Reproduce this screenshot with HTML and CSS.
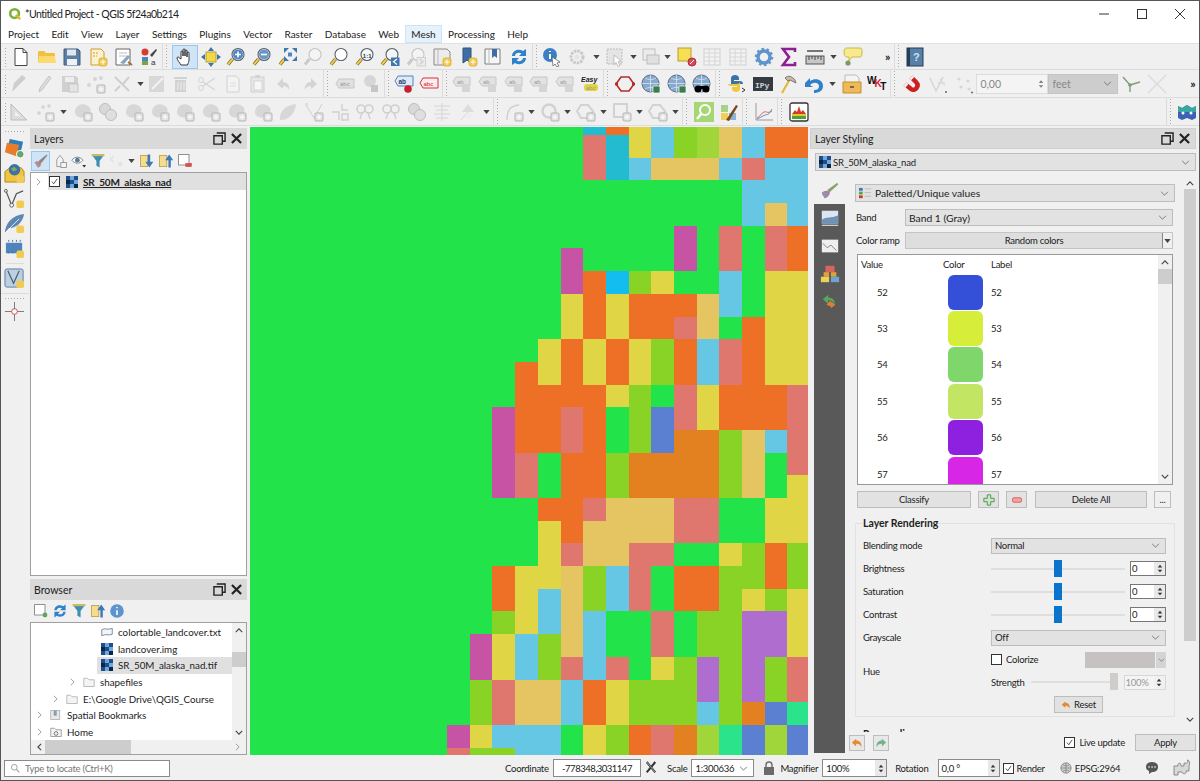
FILE: index.html
```html
<!DOCTYPE html>
<html lang="en">
<head>
  <meta charset="UTF-8" />
  <title>QGIS</title>
  <link rel="stylesheet" href="styles.css">
</head>
<body>

<!-- icon sheet -->
<svg class="sheet" width="0" height="0">
  <defs>
    <symbol id="badge" viewBox="0 0 20 20"><rect x="11" y="11" width="8" height="8" rx="2" fill="#f2cb55" stroke="#d9ab2e" stroke-width=".8"/><path d="M15 12.500v5M12.500 15h5" stroke="#fff" stroke-width="1"/></symbol>
    <symbol id="gbadge" viewBox="0 0 20 20"><rect x="11" y="11" width="8" height="8" rx="1" fill="#e2e2e2" stroke="#b5b5b5"/><path d="M15 12.500v5M12.500 15h5" stroke="#fff"/></symbol>
    <symbol id="qgis" viewBox="0 0 16 16"><circle cx="7.500" cy="7.500" r="5" fill="none" stroke="#7bb33a" stroke-width="3"/><path d="M9 9l5 5" stroke="#e8b52c" stroke-width="2.500"/></symbol>
    <symbol id="new" viewBox="0 0 20 20"><path d="M4 1.500h8l4 4v13H4z" fill="#fff" stroke="#444"/><path d="M12 1.500v4h4" fill="none" stroke="#444"/></symbol>
    <symbol id="open" viewBox="0 0 20 20"><path d="M1 16V5l1-1h5l2 2h8l1 1v9z" fill="#f4bf3c"/><path d="M1 16l1-7h16l1 7z" fill="#fbdb71"/></symbol>
    <symbol id="save" viewBox="0 0 20 20"><path d="M2 2h14l2 2v14H2z" fill="#5d7fa3" stroke="#3f5c7c"/><rect x="5" y="2.500" width="9" height="6" fill="#dfe7ef"/><rect x="5" y="12" width="10" height="6" fill="#eef2f6"/></symbol>
    <symbol id="layout" viewBox="0 0 20 20"><path d="M3 2h10l3 3v13H3z" fill="#fbf1cf" stroke="#d39b2d"/><path d="M5 6h6M5 9h4" stroke="#d39b2d" stroke-dasharray="2 1"/><use href="#badge"/></symbol>
    <symbol id="props" viewBox="0 0 20 20"><path d="M2 2h14v16H2z" fill="#fff" stroke="#666"/><path d="M5 6h8M5 9h8" stroke="#bbb"/><path d="M6 16l8-8 2 2-6 7z" fill="#88a4c4"/><path d="M14 15l4 3" stroke="#a8702a" stroke-width="2"/></symbol>
    <symbol id="style" viewBox="0 0 20 20"><circle cx="6" cy="5" r="3.500" fill="#d43f2d"/><path d="M3 10h6v4H3z" fill="#4b85c5"/><path d="M3 14h6v4H3z" fill="#7aa53e"/><path d="M11 8l6-6 1 1-5 7z" fill="#444"/><text x="12" y="18" class="svg-small">a</text></symbol>
    <symbol id="hand" viewBox="0 0 20 20"><path d="M6 18c-1-2-4-5-4-7 0-1 1.500-1.500 2.500 0L6 12V5c0-1.500 2-1.500 2 0v4V3c0-1.500 2-1.500 2 0v6V4c0-1.500 2-1.500 2 0v6-4c0-1.500 2-1.500 2 0v7c0 2-1 3-1.500 5z" fill="#fff" stroke="#222" stroke-width=".9"/></symbol>
    <symbol id="panto" viewBox="0 0 20 20"><rect x="5" y="5" width="10" height="10" fill="#f0d848" stroke="#b7a22e"/><path d="M10 0l3 4H7zM10 20l-3-4h6zM0 10l4-3v6zM20 10l-4 3V7z" fill="#3d73ad"/></symbol>
    <symbol id="mag" viewBox="0 0 20 20"><path d="M6.500 12L2 17.500" stroke="#6a5a28" stroke-width="3.400"/><path d="M6.500 12L2 17.500" stroke="#eec94a" stroke-width="2"/><circle cx="12" cy="7.500" r="6" fill="#f4f6f8" stroke="#55606a" stroke-width="1.100"/></symbol>
    <symbol id="zin" viewBox="0 0 20 20"><use href="#mag"/><circle cx="12" cy="7.500" r="5" fill="#4f86c0"/><path d="M12 4.500v6M9 7.500h6" stroke="#fff" stroke-width="1.600"/></symbol>
    <symbol id="zout" viewBox="0 0 20 20"><use href="#mag"/><circle cx="12" cy="7.500" r="5" fill="#4f86c0" opacity=".85"/><path d="M9 7.500h6" stroke="#fff" stroke-width="1.600"/></symbol>
    <symbol id="zfull" viewBox="0 0 20 20"><path d="M6.500 12L2 17.500" stroke="#6a5a28" stroke-width="3.400"/><path d="M6.500 12L2 17.500" stroke="#eec94a" stroke-width="2"/><path d="M6 1h5L6 6zM19 1v5l-5-5zM19 14h-5l5-5zM6 9l5 5H6z" fill="#3e76b0"/><rect x="10" y="5.500" width="4" height="4" fill="#4f86c0"/></symbol>
    <symbol id="zoomg" viewBox="0 0 20 20"><path d="M6.500 12L2 17.500" stroke="#c9c9c9" stroke-width="3"/><circle cx="12" cy="7.500" r="6" fill="#f4f4f4" stroke="#c4c4c4" stroke-width="1.100"/></symbol>
    <symbol id="zlayer" viewBox="0 0 20 20"><use href="#mag"/><circle cx="12" cy="7.500" r="5.200" fill="#fff"/></symbol>
    <symbol id="z11" viewBox="0 0 20 20"><use href="#mag"/><text x="7.800" y="10.500" class="svg-bold">1:1</text></symbol>
    <symbol id="zlast" viewBox="0 0 20 20"><use href="#mag"/><rect x="11" y="10.500" width="8.500" height="8.500" fill="#3e76b0"/><path d="M17 12l-3.500 2.700L17 17.500" fill="none" stroke="#fff" stroke-width="1.300"/></symbol>
    <symbol id="znext" viewBox="0 0 20 20"><use href="#zoomg"/><rect x="11" y="10.500" width="8.500" height="8.500" fill="#ececec" stroke="#cfcfcf"/><path d="M13.500 12l3.500 2.700-3.500 2.800" fill="none" stroke="#cfcfcf" stroke-width="1.300"/></symbol>
    <symbol id="view" viewBox="0 0 20 20"><path d="M2 2h13l3 3v13H2z" fill="#ececec" stroke="#8a8a8a"/><path d="M6 2v16" stroke="#bbb"/><use href="#badge"/></symbol>
    <symbol id="bm" viewBox="0 0 20 20"><path d="M5 1h8v15l-4-3-4 3z" fill="#3f6ea6" stroke="#2d527e"/><use href="#badge"/></symbol>
    <symbol id="bmopen" viewBox="0 0 20 20"><path d="M2 2h15v15H2z" fill="#f6f6f6" stroke="#7e7e7e"/><path d="M6 2v15" stroke="#bbb"/><path d="M9 2h5v9l-2.500-2L9 11z" fill="#3f6ea6"/></symbol>
    <symbol id="refresh" viewBox="0 0 20 20"><path d="M3 9c0-5 6-8 11-5l3-2v7h-7l2.500-2.500C10 5 6 6 6 9zM17 11c0 5-6 8-11 5l-3 2v-7h7l-2.500 2.500C10 15 14 14 14 11z" fill="#2f82c9"/></symbol>
    <symbol id="identify" viewBox="0 0 20 20"><circle cx="8" cy="8" r="7" fill="#3d7fc4"/><path d="M8 4v1M8 7v5" stroke="#fff" stroke-width="2"/><path d="M10 10l8 5-3 1 2 3-2 1-2-3-2 2z" fill="#fff" stroke="#555" stroke-width=".7"/></symbol>
    <symbol id="gearg" viewBox="0 0 20 20"><circle cx="10" cy="10" r="6" fill="none" stroke="#c9c9c9" stroke-width="3" stroke-dasharray="2.500 1"/><circle cx="10" cy="10" r="2.500" fill="#e4e4e4"/></symbol>
    <symbol id="selg" viewBox="0 0 20 20"><rect x="2" y="2" width="15" height="15" fill="#e4e4e4" stroke="#bcbcbc" stroke-dasharray="2 1"/><path d="M9 8l7 6-3 .5 2 4-2 1-2-4-2 2z" fill="#fff" stroke="#aaa" stroke-width=".7"/></symbol>
    <symbol id="copyg" viewBox="0 0 20 20"><rect x="2" y="2" width="12" height="11" fill="#ececec" stroke="#bdbdbd"/><rect x="6" y="8" width="12" height="9" fill="#e0e0e0" stroke="#bdbdbd"/></symbol>
    <symbol id="desel" viewBox="0 0 20 20"><rect x="1" y="1" width="13" height="13" fill="#f7df55" stroke="#b99e2a"/><circle cx="15" cy="15" r="4" fill="#d84a55" stroke="#a8323c"/><path d="M13 17l4-4" stroke="#fff"/></symbol>
    <symbol id="tableg" viewBox="0 0 20 20"><rect x="2" y="2" width="16" height="16" fill="#f3f3f3" stroke="#cfcfcf"/><path d="M2 6h16M2 10h16M2 14h16M7 2v16M13 2v16" stroke="#d6d6d6"/></symbol>
    <symbol id="gear" viewBox="0 0 20 20"><circle cx="10" cy="10" r="6" fill="none" stroke="#5e93cc" stroke-width="3.400"/><circle cx="10" cy="10" r="8" fill="none" stroke="#5e93cc" stroke-width="2.500" stroke-dasharray="2.500 2.500"/></symbol>
    <symbol id="sigma" viewBox="0 0 20 20"><path d="M16 5V2H4l6 8-6 8h12v-3" fill="none" stroke="#8b1f93" stroke-width="2.600"/></symbol>
    <symbol id="ruler" viewBox="0 0 20 20"><path d="M2 4h16" stroke="#333" stroke-width="1.300"/><rect x="1" y="9" width="18" height="8" fill="#c7c7c7" stroke="#555"/><path d="M4 9v4M7 9v3M10 9v4M13 9v3M16 9v4" stroke="#444"/></symbol>
    <symbol id="tip" viewBox="0 0 20 20"><path d="M4 1h13c2 0 2 2 2 4s0 5-2 5H9l-3 4V10H4C2 10 1 8 1 5s1-4 3-4z" fill="#f8e98c" stroke="#c9b850"/><circle cx="5" cy="16" r="2.600" fill="#7e9a63"/></symbol>
    <symbol id="help" viewBox="0 0 20 20"><rect x="2" y="1" width="16" height="18" fill="#5680a8" stroke="#243c55"/><rect x="2" y="1" width="3" height="18" fill="#243c55"/><text x="8" y="14" class="svg-q">?</text></symbol>
    <symbol id="pencilg" viewBox="0 0 20 20"><path d="M3 18l2-9 8-8 4 3-8 8z" fill="#cecece"/></symbol>
    <symbol id="pencilt" viewBox="0 0 20 20"><path d="M4 18l1-4 9-12 2 2-9 12z" fill="#dcdcdc" stroke="#c4c4c4"/></symbol>
    <symbol id="saveg" viewBox="0 0 20 20"><path d="M2 2h14l2 2v14H2z" fill="#d0d0d0"/><rect x="5" y="3" width="9" height="5" fill="#eee"/><rect x="9" y="10" width="9" height="8" fill="#e4e4e4" stroke="#c4c4c4"/></symbol>
    <symbol id="dotsg" viewBox="0 0 20 20"><circle cx="3" cy="11" r="2" fill="#d5d5d5"/><circle cx="9" cy="5" r="2" fill="#d5d5d5"/><circle cx="15" cy="4" r="2" fill="#d5d5d5"/><use href="#gbadge"/></symbol>
    <symbol id="toolsg" viewBox="0 0 20 20"><path d="M3 3l14 14M17 3l-6 7M3 17l5-5" stroke="#cfcfcf" stroke-width="2"/></symbol>
    <symbol id="editg" viewBox="0 0 20 20"><rect x="2" y="2" width="15" height="16" fill="#d8d8d8"/><path d="M5 15L16 4" stroke="#f3f3f3" stroke-width="2"/></symbol>
    <symbol id="trashg" viewBox="0 0 20 20"><path d="M3 3h13v2H3zM4 6h11v12H4z" fill="#d2d2d2"/><path d="M7 8v8M10 8v8M13 8v8" stroke="#efefef"/></symbol>
    <symbol id="cutg" viewBox="0 0 20 20"><path d="M18 4L6 12M18 16L6 8" stroke="#d5d5d5" stroke-width="1.400"/><circle cx="4" cy="6" r="2.500" fill="none" stroke="#d5d5d5"/><circle cx="4" cy="14" r="2.500" fill="none" stroke="#d5d5d5"/></symbol>
    <symbol id="pageg" viewBox="0 0 20 20"><path d="M4 2h9l3 3v13H4z" fill="#f3f3f3" stroke="#d0d0d0"/><path d="M7 9h6M7 12h6" stroke="#ddd"/></symbol>
    <symbol id="pasteg" viewBox="0 0 20 20"><rect x="3" y="3" width="13" height="15" fill="#e7e7e7" stroke="#cfcfcf"/><rect x="6" y="7" width="8" height="9" fill="#f6f6f6" stroke="#d4d4d4"/><rect x="7" y="1" width="5" height="3" fill="#d4d4d4"/></symbol>
    <symbol id="undog" viewBox="0 0 20 20"><path d="M9 4L3 10l6 5v-3c3 0 5 1 6 4 1-5-2-8-6-8z" fill="#d4d4d4"/></symbol>
    <symbol id="redog" viewBox="0 0 20 20"><path d="M11 4l6 6-6 5v-3c-3 0-5 1-6 4-1-5 2-8 6-8z" fill="#d4d4d4"/></symbol>
    <symbol id="abcg" viewBox="0 0 20 20"><path d="M4 5h15v9H4L1 9.500z" fill="#e0e0e0" stroke="#c6c6c6"/><text x="5" y="12.300" class="svg-tag">abc</text></symbol>
    <symbol id="abcpin" viewBox="0 0 20 20"><circle cx="9" cy="7" r="6" fill="#d6d6d6"/><path d="M10 11h7v7h-7z" fill="#c6c6c6"/></symbol>
    <symbol id="abpin" viewBox="0 0 20 20"><path d="M4 2h15v10H4L1 7z" fill="#dfeaf6" stroke="#4d84c0"/><text x="4.500" y="9.600" class="svg-tag-d">ab</text><circle cx="14" cy="15" r="3.800" fill="#c91e2d"/></symbol>
    <symbol id="abcred" viewBox="0 0 20 20"><path d="M4 4h15v10H4L1 9z" fill="#fdecec" stroke="#d4353f"/><text x="4.500" y="11.800" class="svg-tag-r">abc</text></symbol>
    <symbol id="labg" viewBox="0 0 20 20"><path d="M4 3h14v9H4L1 7.500z" fill="#e2e2e2" stroke="#c6c6c6"/><text x="5" y="10" class="svg-tag">ab</text><rect x="10" y="10" width="8" height="8" fill="#d5d5d5"/></symbol>
    <symbol id="easy" viewBox="0 0 20 20"><text x="0" y="8" class="svg-easy">Easy</text><rect x="3" y="10" width="14" height="7" rx="3" fill="#e5d33e"/><text x="5" y="15.800" class="svg-tag">abc</text></symbol>
    <symbol id="hex" viewBox="0 0 20 20"><path d="M6 3h8l5 7-5 7H6l-5-7z" fill="none" stroke="#b42b2b" stroke-width="1.600"/><circle cx="1.500" cy="10" r="1.700" fill="#b42b2b"/><circle cx="18.500" cy="10" r="1.700" fill="#b42b2b"/></symbol>
    <symbol id="globe" viewBox="0 0 20 20"><circle cx="9.500" cy="9.500" r="8.500" fill="#87a9cc" stroke="#566f8c"/><path d="M1 9.500h17M9.500 1v17M4 4c3 2 8 2 11 0M4 15c3-2 8-2 11 0" stroke="#d9e5f0" fill="none" stroke-width=".8"/></symbol>
    <symbol id="globeb" viewBox="0 0 20 20"><use href="#globe"/><rect x="12" y="12" width="7" height="7" rx="1" fill="#3a7c4a" stroke="#fff" stroke-width=".7"/></symbol>
    <symbol id="binoc" viewBox="0 0 20 20"><use href="#globe"/><circle cx="6" cy="15" r="3.500"/><circle cx="14" cy="15" r="3.500"/><rect x="7" y="12" width="6" height="3"/></symbol>
    <symbol id="py" viewBox="0 0 20 20"><path d="M6 8V4c0-2 2-3 4-3s4 1 4 3v2H9v1h6c2 0 3 1 3 3H9c-2 0-3 1-3 3z" fill="#3a73a8" transform="translate(-2 0)"/><path d="M14 11v4c0 2-2 3-4 3s-4-1-4-3v-2h5v-1H5c-2 0-3-1-3-2h9c2 0 3-1 3-3z" fill="#f0c83f" transform="translate(-1 0)"/><path d="M15 14l3 2-3 2" fill="none" stroke="#333"/></symbol>
    <symbol id="ipy" viewBox="0 0 20 20"><rect y="3" width="20" height="14" fill="#353b40"/><text x="2" y="13.500" class="svg-ipy">IPy</text></symbol>
    <symbol id="hammer" viewBox="0 0 20 20"><path d="M4 19L12 5" stroke="#e2b93b" stroke-width="2.200"/><path d="M7 4c3-3 7-2 10 2l1 3-6-3-2 1z" fill="#c9b9a4" stroke="#555" stroke-width=".7"/></symbol>
    <symbol id="undob" viewBox="0 0 20 20"><path d="M1 9l5-5v3c6-4 13-1 13 5s-6 7-9 7v-3c3 0 5-1 5-4 0-3-5-5-9-1l3 2H1z" fill="#2f82c9"/></symbol>
    <symbol id="archive" viewBox="0 0 20 20"><path d="M3 1h11l3 3v7H3z" fill="#f4f4f4" stroke="#bbb"/><path d="M1 8h18v11H1z" fill="#eeb958" stroke="#c58f2e"/><path d="M8 13h4" stroke="#444" stroke-width="1.400"/></symbol>
    <symbol id="magnet" viewBox="0 0 20 20"><path d="M3 10l6 5c4 3 9-3 5-7L9 3" fill="none" stroke="#cc1f1f" stroke-width="4.500"/><path d="M3 10l2 1.700M9 3l1.700 1.700" stroke="#f4f4f4" stroke-width="4.500"/></symbol>
    <symbol id="vertg" viewBox="0 0 20 20"><path d="M2 4l6 13 7-14" fill="none" stroke="#d6d6d6" stroke-width="1.600"/><path d="M9 9h8M12 5l5 7" stroke="#d6d6d6"/><circle cx="18" cy="18" r="1" fill="#666"/></symbol>
    <symbol id="dotg2" viewBox="0 0 20 20"><circle cx="5" cy="5" r="1.600" fill="#d6d6d6"/><circle cx="14" cy="7" r="1.600" fill="#d6d6d6"/><circle cx="7" cy="13" r="1.600" fill="#d6d6d6"/><circle cx="15" cy="15" r="1.600" fill="#d6d6d6"/><circle cx="18" cy="18.500" r="1" fill="#666"/></symbol>
    <symbol id="ysplit" viewBox="0 0 20 20"><path d="M9 18v-7L2 3M9 11l10-3" fill="none" stroke="#7f9d72" stroke-width="1.400"/><circle cx="9" cy="11" r="1.800" fill="#7f9d72"/></symbol>
    <symbol id="xg" viewBox="0 0 20 20"><path d="M1 1l18 18M19 1L1 19" stroke="#dcdcdc" stroke-width="1.500"/></symbol>
    <symbol id="triang" viewBox="0 0 20 20"><path d="M2 2v16h16z" fill="#dcdcdc" stroke="#bdbdbd"/><path d="M6 9v5h5z" fill="#f0f0f0"/></symbol>
    <symbol id="dotb" viewBox="0 0 20 20"><circle cx="4" cy="11" r="1.800" fill="#d3d3d3"/><circle cx="8" cy="5" r="1.800" fill="#d3d3d3"/><circle cx="14" cy="4" r="1.800" fill="#d3d3d3"/><use href="#gbadge"/></symbol>
    <symbol id="blob" viewBox="0 0 20 20"><path d="M3 6c2-4 8-5 12-2 4 2 3 7 0 8-3 2-5 5-9 3-4-1-5-5-3-9z" fill="#d7d7d7"/><use href="#gbadge"/></symbol>
    <symbol id="blob2" viewBox="0 0 20 20"><circle cx="7" cy="7" r="5.500" fill="#d9d9d9" stroke="#bdbdbd"/><circle cx="13" cy="13" r="5.500" fill="#dfdfdf" stroke="#bdbdbd"/></symbol>
    <symbol id="leaf" viewBox="0 0 20 20"><path d="M2 18c-1-7 4-15 16-16-1 10-7 16-16 16z" fill="#d7d7d7"/></symbol>
    <symbol id="nodeg" viewBox="0 0 20 20"><path d="M2 3l8 13 8-14" fill="none" stroke="#cfcfcf"/><rect x="1" y="1" width="3" height="3" fill="#ddd"/><use href="#gbadge"/></symbol>
    <symbol id="splitg" viewBox="0 0 20 20"><path d="M2 10h7v8M12 2v6h6M12 12h6v6h-6z" fill="none" stroke="#cfcfcf" stroke-width="1.400"/></symbol>
    <symbol id="scis" viewBox="0 0 20 20"><circle cx="6" cy="7" r="4" fill="none" stroke="#cfcfcf" stroke-width="1.600"/><circle cx="14" cy="7" r="4" fill="none" stroke="#cfcfcf" stroke-width="1.600"/><path d="M7 11l-2 6M13 11l2 6" stroke="#cfcfcf" stroke-width="1.400"/></symbol>
    <symbol id="lines" viewBox="0 0 20 20"><path d="M2 4h16M4 8h12M2 12h16M4 16h12M10 1v18" stroke="#d5d5d5"/></symbol>
    <symbol id="arrowg" viewBox="0 0 20 20"><path d="M3 18l7-8" stroke="#d8d8d8"/><path d="M10 2l6 8H4z" fill="#dcdcdc"/><path d="M7 12h8l-4 6z" fill="#ececec"/></symbol>
    <symbol id="curveg" viewBox="0 0 20 20"><path d="M3 18C3 8 6 4 15 3" fill="none" stroke="#cfcfcf" stroke-width="1.500"/><use href="#gbadge"/></symbol>
    <symbol id="circleg" viewBox="0 0 20 20"><circle cx="9" cy="9" r="6.500" fill="none" stroke="#d2d2d2" stroke-width="2.500"/><use href="#gbadge"/></symbol>
    <symbol id="boxg" viewBox="0 0 20 20"><rect x="2" y="2" width="13" height="13" fill="none" stroke="#d2d2d2" stroke-width="2"/><use href="#gbadge"/></symbol>
    <symbol id="hexg" viewBox="0 0 20 20"><path d="M5 3h7l5 6-5 7H5L1 9z" fill="none" stroke="#d2d2d2" stroke-width="2"/><use href="#gbadge"/></symbol>
    <symbol id="idg" viewBox="0 0 20 20"><rect width="20" height="20" fill="#a5d774"/><circle cx="11" cy="8" r="5" fill="none" stroke="#fff" stroke-width="2"/><path d="M7 12l-4 5" stroke="#fff" stroke-width="2.500"/></symbol>
    <symbol id="paint" viewBox="0 0 20 20"><rect x="2" y="3" width="7" height="7" fill="#a7d28a"/><rect x="10" y="11" width="7" height="7" fill="#8db3d8"/><rect x="2" y="11" width="7" height="7" fill="#f1d05a"/><path d="M7 18L17 3l2 1-9 15z" fill="#7a4a1f"/></symbol>
    <symbol id="chart" viewBox="0 0 20 20"><path d="M2 1v17h17" fill="none" stroke="#9a9a9a"/><path d="M3 16c3-1 4-5 7-6s3 2 8-1" fill="none" stroke="#d94a4a" stroke-width=".8"/><path d="M3 17c3-1 5-3 8-4s3 1 7-6" fill="none" stroke="#3c7cc4" stroke-width=".8"/></symbol>
    <symbol id="histo" viewBox="0 0 20 20"><rect x="1" y="1" width="18" height="18" rx="2" fill="#fff" stroke="#333" stroke-width="1.300"/><path d="M3 12l3-4 2 2 2-6 2 6 2-2 3 4z" fill="#d33a2a"/><rect x="3" y="12" width="14" height="2" fill="#e7c52c"/><rect x="3" y="14" width="14" height="3" fill="#4ca33c"/></symbol>
    <symbol id="masks" viewBox="0 0 20 20"><path d="M1 4l4 2 5-3 5 3 4-2v12l-4 2-5-2-5 2-4-2z" fill="#3a63b4"/><path d="M1 4l4 2 5-3 5 3 4-2v6H1z" fill="#3aa6a4"/><circle cx="6" cy="11" r="1.500" fill="#fff"/><circle cx="14" cy="11" r="1.500" fill="#fff"/></symbol>
    <symbol id="brush" viewBox="0 0 20 20"><path d="M7 10L17 2l1 1-8 10z" fill="#8a8a8a"/><path d="M2 12c3-3 6-2 8 1 0 4-3 5-4 5-1-3-3-4-4-6z" fill="#df6f5f"/><path d="M2 12l4-1 2 5-2 2z" fill="#8fa0b4"/></symbol>
    <symbol id="eye" viewBox="0 0 20 20"><path d="M1 9c4-5 10-5 14 0-4 5-10 5-14 0z" fill="#fff" stroke="#5f6f80"/><circle cx="8" cy="9" r="3" fill="#5f7a96"/><path d="M14 15h5l-2.500 3z" fill="#333"/></symbol>
    <symbol id="funnel" viewBox="0 0 20 20"><path d="M2 2h16l-6 8v8l-4-2v-6z" fill="#3f8fb5"/><path d="M2 2h16v2H2z" fill="#e5b63f"/></symbol>
    <symbol id="lock3d" viewBox="0 0 20 20"><path d="M6 8l4-5 4 5v9H6z" fill="#f3f3f3" stroke="#888"/><rect x="11" y="12" width="7" height="6" fill="#f3f3f3" stroke="#888"/></symbol>
    <symbol id="expg" viewBox="0 0 20 20"><path d="M5 3v3H2v3h3v3" fill="none" stroke="#d9d9d9"/><circle cx="14" cy="14" r="3" fill="#e4e4e4"/></symbol>
    <symbol id="down" viewBox="0 0 20 20"><rect x="2" y="3" width="9" height="14" fill="#f7dc8e" stroke="#b89a4a"/><path d="M14 2v9h4l-5 7-5-7h3V2z" fill="#3d78b8"/></symbol>
    <symbol id="up" viewBox="0 0 20 20"><rect x="2" y="3" width="9" height="14" fill="#f7dc8e" stroke="#b89a4a"/><path d="M13 18V9H9l5-7 5 7h-3v9z" fill="#3d78b8"/></symbol>
    <symbol id="remove" viewBox="0 0 20 20"><rect x="2" y="2" width="13" height="13" fill="#fff" stroke="#777"/><rect x="11" y="13" width="7" height="4" fill="#e05050" stroke="#a83232" stroke-width=".6"/></symbol>
    <symbol id="addg" viewBox="0 0 20 20"><rect x="2" y="2" width="13" height="13" fill="#fff" stroke="#777"/><circle cx="15" cy="15" r="3" fill="#5da65d"/></symbol>
    <symbol id="info" viewBox="0 0 20 20"><circle cx="10" cy="10" r="8.500" fill="#5d93d0"/><path d="M10 5v1.500M10 9v6" stroke="#fff" stroke-width="2"/></symbol>
    <symbol id="float" viewBox="0 0 14 14"><path d="M4 1h9v9h-3M1 4h9v9H1z" fill="none" stroke="#222" stroke-width="1.500"/></symbol>
    <symbol id="close" viewBox="0 0 12 12"><path d="M1 1l10 10M11 1L1 11" stroke="#222" stroke-width="2.400"/></symbol>
    <symbol id="mgr" viewBox="0 0 22 22"><path d="M6 1l14 3-3 13L3 14z" fill="#2a7fb8"/><path d="M3 5l13 2-3 12L1 15z" fill="#e87c2a"/><circle cx="17" cy="17" r="4" fill="#6ca26c" stroke="#fff"/></symbol>
    <symbol id="addras" viewBox="0 0 22 22"><path d="M1 9l5-4h12l3 4v11H1z" fill="#f0c53d" stroke="#a88720"/><circle cx="11" cy="7" r="6" fill="#3e70a8"/><path d="M7 6l4-2 3 3-4 2z" fill="#7aae5a"/><rect x="13" y="13" width="8" height="8" rx="2" fill="#f2cb55"/></symbol>
    <symbol id="addvec" viewBox="0 0 22 22"><path d="M2 3l6 15 5-12 7-3" fill="none" stroke="#555" stroke-width="1.300"/><circle cx="8" cy="18" r="2" fill="#fff" stroke="#555"/><circle cx="2" cy="3" r="1.500" fill="#fff" stroke="#555"/><rect x="13" y="13" width="8" height="8" rx="2" fill="#f2cb55"/></symbol>
    <symbol id="feather" viewBox="0 0 22 22"><path d="M1 21c0-10 8-19 20-20-1 9-9 15-16 15z" fill="#5d87b5"/><path d="M1 21L16 6" stroke="#fff" stroke-width=".8"/><rect x="13" y="13" width="8" height="8" rx="2" fill="#f2cb55"/></symbol>
    <symbol id="chip" viewBox="0 0 22 22"><rect x="2" y="5" width="17" height="11" fill="#4f83bd"/><path d="M5 2v18M9 2v18M13 2v18M17 2v18" stroke="#4a6a8a" stroke-dasharray="2 10"/><rect x="13" y="13" width="8" height="8" rx="2" fill="#f2cb55"/></symbol>
    <symbol id="vlayer" viewBox="0 0 22 22"><rect x="1" y="1" width="19" height="19" rx="2" fill="#bcd0e4" stroke="#5d7a96"/><path d="M4 3l6 13 6-13" fill="none" stroke="#4a5a68" stroke-width="1.200"/><rect x="13" y="13" width="8" height="8" rx="2" fill="#f2cb55"/></symbol>
    <symbol id="cross" viewBox="0 0 22 22"><path d="M11 1v20M1 11h20" stroke="#777"/><circle cx="11" cy="11" r="3" fill="#fff" stroke="#c24a4a"/></symbol>
    <symbol id="rast" viewBox="0 0 12 12"><path fill="#1f4e8a" d="M0 0h4v4H0zM8 0h4v4H8zM4 4h4v4H4zM0 8h4v4H0z"/><path fill="#6fa8dc" d="M4 0h4v4H4zM8 4h4v4H8zM4 8h4v4H4z"/><path fill="#0b2746" d="M0 4h4v4H0zM8 8h4v4H8z"/></symbol>
    <symbol id="tick" viewBox="0 0 12 12"><path d="M2.500 6l2.500 3 4.500-6.500" fill="none" stroke="#222"/></symbol>
    <symbol id="vchev" viewBox="0 0 10 6"><path d="M1 1l4 4 4-4" fill="none" stroke="#666"/></symbol>
    <symbol id="uchev" viewBox="0 0 10 6"><path d="M1 5l4-4 4 4" fill="none" stroke="#444" stroke-width="1.400"/></symbol>
    <symbol id="dchev" viewBox="0 0 10 6"><path d="M1 1l4 4 4-4" fill="none" stroke="#444" stroke-width="1.400"/></symbol>
    <symbol id="rchev" viewBox="0 0 6 10"><path d="M1 1l4 4-4 4" fill="none" stroke="#888"/></symbol>
    <symbol id="lchev" viewBox="0 0 6 10"><path d="M5 1L1 5l4 4" fill="none" stroke="#444" stroke-width="1.400"/></symbol>
    <symbol id="updown" viewBox="0 0 8 12"><path d="M4 1l3 3.500H1zM4 11L1 7.500h6z" fill="#333"/></symbol>
    <symbol id="tri" viewBox="0 0 8 5"><path d="M0 0h8L4 5z" fill="#444"/></symbol>
    <symbol id="folder" viewBox="0 0 16 14"><path d="M1 13V2h5l2 2h7v9z" fill="#f4f4f4" stroke="#aaa"/></symbol>
    <symbol id="polyf" viewBox="0 0 16 14"><path d="M1 4c4-3 9 1 14-2v8c-5 2-9-1-14 2z" fill="#f2f6fa" stroke="#5d6e80"/></symbol>
    <symbol id="bookm" viewBox="0 0 16 14"><rect x="1" y="1" width="12" height="12" fill="#e8e8e8" stroke="#aaa"/><rect x="5" y="1" width="4" height="7" fill="#8a9db2"/></symbol>
    <symbol id="home" viewBox="0 0 16 14"><path d="M1 13V2h5l2 2h7v9z" fill="#f4f4f4" stroke="#888"/><circle cx="8" cy="9" r="2.500" fill="none" stroke="#555"/></symbol>
    <symbol id="search" viewBox="0 0 14 14"><circle cx="6" cy="6" r="4" fill="none" stroke="#9a9a9a" stroke-width="1.300"/><path d="M9 9l4 4" stroke="#9a9a9a" stroke-width="1.500"/></symbol>
    <symbol id="mouse" viewBox="0 0 14 16"><path d="M2 1l10 12M12 1L2 13" stroke="#333" stroke-width="2.400"/><path d="M2 1l10 12" stroke="#fff" stroke-width=".6"/></symbol>
    <symbol id="lock" viewBox="0 0 12 14"><rect x="1" y="6" width="10" height="8" fill="#6a6a6a"/><path d="M3 6V4c0-4 6-4 6 0v2" fill="none" stroke="#6a6a6a" stroke-width="1.400"/></symbol>
    <symbol id="globes" viewBox="0 0 14 14"><circle cx="7" cy="7" r="6" fill="#ccc" stroke="#888"/><path d="M1 7h12M7 1v12M3 3c2 2 6 2 8 0M3 11c2-2 6-2 8 0" stroke="#777" fill="none" stroke-width=".7"/></symbol>
    <symbol id="bubble" viewBox="0 0 14 14"><path d="M7 1c4 0 6 2 6 5s-2 5-6 5l-3 2v-3C2 9 1 8 1 6c0-3 2-5 6-5z" fill="#555"/><path d="M4 6h.1M7 6h.1M10 6h.1" stroke="#fff" stroke-width="1.500" stroke-linecap="round"/></symbol>
    <symbol id="puzzle" viewBox="0 0 20 20"><path d="M3 8h4c-1-3 3-4 3-1v1h3V5c3 1 5-1 3-3 3 0 3 4 2 6v5h-3c1 3-3 4-4 1H7v3H3z" fill="#d8d8d8" stroke="#777" stroke-width=".8"/></symbol>
    <symbol id="plus" viewBox="0 0 14 14"><path d="M5 1h4v4h4v4H9v4H5V9H1V5h4z" fill="#cde8c8" stroke="#3e8a3e"/></symbol>
    <symbol id="minus" viewBox="0 0 14 8"><rect x="1" y="1" width="12" height="6" rx="2" fill="#f2a3a3" stroke="#d84444"/></symbol>
    <symbol id="undoo" viewBox="0 0 14 14"><path d="M6 2L1 6.500 6 11V8c3 0 5 1 6 4 1-5-2-8-6-8z" fill="#e58a33"/></symbol>
    <symbol id="redog2" viewBox="0 0 14 14"><path d="M8 2l5 4.500L8 11V8c-3 0-5 1-6 4-1-5 2-8 6-8z" fill="#6fb58a"/></symbol>
    <symbol id="pal" viewBox="0 0 14 14"><rect x="0" y="1" width="4" height="3" fill="#3b78b8"/><rect x="0" y="5" width="4" height="3" fill="#5aa64a"/><rect x="0" y="9" width="4" height="3" fill="#c23b2b"/><path d="M6 2h7M6 6h7M6 10h7" stroke="#bbb"/></symbol>
    <symbol id="s-brush" viewBox="0 0 22 22"><path d="M8 11L19 3l1 2-10 9z" fill="#8aa070"/><path d="M2 14c3-3 7-3 9 0-1 4-4 6-6 6-1-2-3-4-3-6z" fill="#b77a9e"/><path d="M2 14l4-1 3 5-3 2z" fill="#8798ad"/></symbol>
    <symbol id="s-trans" viewBox="0 0 22 22"><rect x="2" y="3" width="18" height="14" fill="#dce6f0"/><path d="M2 13c5-4 10-1 18-5v9H2z" fill="#6f93b8"/><path d="M2 19h18" stroke="#fff"/></symbol>
    <symbol id="s-hist" viewBox="0 0 22 22"><rect x="2" y="4" width="18" height="14" fill="#eee"/><path d="M3 8l5 5 4-3 6 6" fill="none" stroke="#777"/></symbol>
    <symbol id="s-pyr" viewBox="0 0 22 22"><rect x="6" y="2" width="10" height="7" fill="#d6655e"/><rect x="4" y="9" width="6" height="5" fill="#e2a13a"/><rect x="12" y="9" width="6" height="5" fill="#e2a13a"/><rect x="1" y="14" width="9" height="6" fill="#ecd15b"/><rect x="12" y="14" width="9" height="6" fill="#6fa3d0"/></symbol>
    <symbol id="s-hist2" viewBox="0 0 22 22"><path d="M9 3L3 8l6 5V9c4 0 6 2 7 5 1-5-2-8-7-8z" fill="#5aa65a"/><path d="M11 10l6 4-5 4v-2l-5-2z" fill="#d9813a"/></symbol>
  </defs>
</svg>

<div class="window">

  <header class="titlebar">
    <svg class="logo"><use href="#qgis"/></svg>
    <span class="title">*Untitled Project - QGIS 5f24a0b214</span>
    <div class="winctl">
      <svg viewBox="0 0 10 10"><path d="M0 5h10" stroke="#333"/></svg>
      <svg viewBox="0 0 10 10"><rect x=".5" y=".5" width="9" height="9" fill="none" stroke="#333"/></svg>
      <svg viewBox="0 0 10 10"><path d="M0 0l10 10M10 0L0 10" stroke="#333"/></svg>
    </div>
  </header>

  <nav class="menu">
    <span>Project</span><span>Edit</span><span>View</span><span>Layer</span><span>Settings</span><span>Plugins</span><span>Vector</span><span>Raster</span><span>Database</span><span>Web</span><span class="on">Mesh</span><span>Processing</span><span>Help</span>
  </nav>

  <div class="tb tb1">
    <i class="grip"></i>
    <b class="btn"><svg><use href="#new"/></svg></b>
    <b class="btn"><svg><use href="#open"/></svg></b>
    <b class="btn"><svg><use href="#save"/></svg></b>
    <b class="btn"><svg><use href="#layout"/></svg></b>
    <b class="btn"><svg><use href="#props"/></svg></b>
    <b class="btn"><svg><use href="#style"/></svg></b>
    <i class="sep w10"></i>
    <b class="btn active"><svg><use href="#hand"/></svg></b>
    <b class="btn"><svg><use href="#panto"/></svg></b>
    <b class="btn"><svg><use href="#zin"/></svg></b>
    <b class="btn"><svg><use href="#zout"/></svg></b>
    <b class="btn"><svg><use href="#zfull"/></svg></b>
    <b class="btn"><svg><use href="#zoomg"/></svg></b>
    <b class="btn"><svg><use href="#zlayer"/></svg></b>
    <b class="btn"><svg><use href="#z11"/></svg></b>
    <b class="btn"><svg><use href="#zlast"/></svg></b>
    <b class="btn"><svg><use href="#znext"/></svg></b>
    <b class="btn"><svg><use href="#view"/></svg></b>
    <b class="btn"><svg><use href="#bm"/></svg></b>
    <b class="btn"><svg><use href="#bmopen"/></svg></b>
    <b class="btn"><svg><use href="#refresh"/></svg></b>
    <i class="sep w7"></i>
    <b class="btn"><svg><use href="#identify"/></svg></b>
    <b class="btn"><svg><use href="#gearg"/></svg></b><b class="drop"><svg><use href="#tri"/></svg></b>
    <b class="btn"><svg><use href="#selg"/></svg></b><b class="drop"><svg><use href="#tri"/></svg></b>
    <b class="btn n"><svg><use href="#copyg"/></svg></b><b class="drop"><svg><use href="#tri"/></svg></b>
    <b class="btn"><svg><use href="#desel"/></svg></b>
    <b class="btn"><svg><use href="#tableg"/></svg></b>
    <b class="btn"><svg><use href="#tableg"/></svg></b>
    <b class="btn"><svg><use href="#gear"/></svg></b>
    <b class="btn"><svg><use href="#sigma"/></svg></b>
    <b class="btn"><svg><use href="#ruler"/></svg></b><b class="drop"><svg><use href="#tri"/></svg></b>
    <b class="btn"><svg><use href="#tip"/></svg></b>
    <span class="more m1">»</span>
    <i class="sep w9"></i>
    <b class="btn"><svg><use href="#help"/></svg></b>
  </div>

  <div class="tb tb2">
    <i class="grip"></i>
    <b class="btn"><svg><use href="#pencilg"/></svg></b>
    <b class="btn"><svg><use href="#pencilt"/></svg></b>
    <b class="btn"><svg><use href="#saveg"/></svg></b>
    <b class="btn"><svg><use href="#dotsg"/></svg></b>
    <b class="btn"><svg><use href="#toolsg"/></svg></b><b class="drop"><svg><use href="#tri"/></svg></b>
    <b class="btn n"><svg><use href="#editg"/></svg></b>
    <b class="btn"><svg><use href="#trashg"/></svg></b>
    <b class="btn"><svg><use href="#cutg"/></svg></b>
    <b class="btn"><svg><use href="#pageg"/></svg></b>
    <b class="btn"><svg><use href="#pasteg"/></svg></b>
    <b class="btn"><svg><use href="#undog"/></svg></b>
    <b class="btn"><svg><use href="#redog"/></svg></b>
    <i class="sep w10"></i>
    <b class="btn"><svg><use href="#abcg"/></svg></b>
    <b class="btn"><svg><use href="#abcpin"/></svg></b>
    <i class="sep w7"></i>
    <b class="btn"><svg><use href="#abpin"/></svg></b>
    <b class="btn"><svg><use href="#abcred"/></svg></b>
    <i class="sep w7"></i>
    <b class="btn"><svg><use href="#labg"/></svg></b>
    <b class="btn"><svg><use href="#labg"/></svg></b>
    <b class="btn"><svg><use href="#labg"/></svg></b>
    <b class="btn"><svg><use href="#labg"/></svg></b>
    <b class="btn"><svg><use href="#labg"/></svg></b>
    <b class="btn"><svg><use href="#easy"/></svg></b>
    <i class="sep w9"></i>
    <b class="btn"><svg><use href="#hex"/></svg></b>
    <b class="btn"><svg><use href="#globeb"/></svg></b>
    <b class="btn"><svg><use href="#globeb"/></svg></b>
    <b class="btn"><svg><use href="#binoc"/></svg></b>
    <i class="sep w9"></i>
    <b class="btn"><svg><use href="#py"/></svg></b>
    <b class="btn"><svg><use href="#ipy"/></svg></b>
    <b class="btn"><svg><use href="#hammer"/></svg></b>
    <b class="btn"><svg><use href="#undob"/></svg></b><b class="drop"><svg><use href="#tri"/></svg></b>
    <b class="btn"><svg><use href="#archive"/></svg></b>
    <b class="btn"><svg viewBox="0 0 20 20"><text x="0" y="10" class="svg-w">W<tspan class="svg-kr" dx="-2" dy="3">K</tspan><tspan dx="-1.500" dy="3">T</tspan></text></svg></b>
    <i class="sep w9"></i>
    <b class="btn"><svg><use href="#magnet"/></svg></b>
    <b class="btn"><svg><use href="#vertg"/></svg></b>
    <b class="btn"><svg><use href="#dotg2"/></svg></b>
    <div class="tb-spin"><span>0,00</span><svg><use href="#updown"/></svg></div>
    <div class="tb-combo"><span>feet</span><svg><use href="#vchev"/></svg></div>
    <b class="btn"><svg><use href="#ysplit"/></svg></b>
    <b class="btn"><svg><use href="#xg"/></svg></b>
    <span class="more m2">»</span>
  </div>

  <div class="tb tb3">
    <i class="grip"></i>
    <b class="btn"><svg><use href="#triang"/></svg></b>
    <b class="btn"><svg><use href="#dotb"/></svg></b><b class="drop"><svg><use href="#tri"/></svg></b>
    <b class="btn"><svg><use href="#blob"/></svg></b>
    <b class="btn"><svg><use href="#blob2"/></svg></b>
    <b class="btn"><svg><use href="#blob"/></svg></b>
    <b class="btn"><svg><use href="#blob"/></svg></b>
    <b class="btn"><svg><use href="#blob"/></svg></b>
    <b class="btn"><svg><use href="#blob"/></svg></b>
    <b class="btn"><svg><use href="#blob"/></svg></b>
    <b class="btn"><svg><use href="#blob"/></svg></b>
    <b class="btn"><svg><use href="#leaf"/></svg></b>
    <b class="btn"><svg><use href="#nodeg"/></svg></b>
    <b class="btn"><svg><use href="#splitg"/></svg></b>
    <b class="btn"><svg><use href="#scis"/></svg></b>
    <b class="btn"><svg><use href="#scis"/></svg></b>
    <b class="btn"><svg><use href="#blob2"/></svg></b>
    <b class="btn"><svg><use href="#lines"/></svg></b>
    <b class="btn"><svg><use href="#arrowg"/></svg></b><b class="drop"><svg><use href="#tri"/></svg></b>
    <i class="sep w9"></i>
    <b class="btn s"><svg><use href="#curveg"/></svg></b><b class="drop"><svg><use href="#tri"/></svg></b>
    <b class="btn s"><svg><use href="#circleg"/></svg></b><b class="drop"><svg><use href="#tri"/></svg></b>
    <b class="btn s"><svg><use href="#hexg"/></svg></b><b class="drop"><svg><use href="#tri"/></svg></b>
    <b class="btn s"><svg><use href="#boxg"/></svg></b><b class="drop"><svg><use href="#tri"/></svg></b>
    <b class="btn s"><svg><use href="#hexg"/></svg></b><b class="drop"><svg><use href="#tri"/></svg></b>
    <i class="sep w9"></i>
    <b class="btn"><svg><use href="#idg"/></svg></b>
    <b class="btn"><svg><use href="#paint"/></svg></b>
    <i class="sep w9"></i>
    <b class="btn"><svg><use href="#chart"/></svg></b>
    <i class="sep w9"></i>
    <b class="btn"><svg><use href="#histo"/></svg></b>
    <i class="sep push"></i>
    <b class="btn"><svg><use href="#masks"/></svg></b>
  </div>

  <div class="main">
    <aside class="lbar">
      <i class="hgrip"></i>
      <b><svg><use href="#mgr"/></svg></b>
      <b><svg><use href="#addras"/></svg></b>
      <b><svg><use href="#addvec"/></svg></b>
      <b><svg><use href="#feather"/></svg></b>
      <b><svg><use href="#chip"/></svg></b>
      <i class="hsep"></i>
      <b><svg><use href="#vlayer"/></svg></b>
      <i class="hline"></i>
      <i class="hgrip"></i>
      <b class="last"><svg><use href="#cross"/></svg></b>
    </aside>

    <div class="docks">
      <section class="dock layers">
        <div class="dock-title"><span>Layers</span><svg class="float"><use href="#float"/></svg><svg class="x"><use href="#close"/></svg></div>
        <div class="dock-tools">
          <b class="btn active"><svg><use href="#brush"/></svg></b>
          <b class="btn"><svg><use href="#lock3d"/></svg></b>
          <b class="btn"><svg><use href="#eye"/></svg></b>
          <b class="btn"><svg><use href="#funnel"/></svg></b>
          <b class="btn"><svg><use href="#expg"/></svg></b><b class="drop"><svg><use href="#tri"/></svg></b>
          <b class="btn"><svg><use href="#down"/></svg></b>
          <b class="btn"><svg><use href="#up"/></svg></b>
          <b class="btn"><svg><use href="#remove"/></svg></b>
        </div>
        <div class="tree">
          <div class="layer-row">
            <svg class="twist"><use href="#rchev"/></svg>
            <span class="check"><svg><use href="#tick"/></svg></span>
            <svg class="rast"><use href="#rast"/></svg>
            <span class="layer-name">SR_50M_alaska_nad</span>
          </div>
        </div>
      </section>

      <section class="dock browser">
        <div class="dock-title"><span>Browser</span><svg class="float"><use href="#float"/></svg><svg class="x"><use href="#close"/></svg></div>
        <div class="dock-tools short">
          <b class="btn"><svg><use href="#addg"/></svg></b>
          <b class="btn"><svg><use href="#refresh"/></svg></b>
          <b class="btn"><svg><use href="#funnel"/></svg></b>
          <b class="btn"><svg><use href="#up"/></svg></b>
          <b class="btn"><svg><use href="#info"/></svg></b>
        </div>
        <div class="tree btree">
          <div class="brows">
            <div class="brow d3"><svg class="ico"><use href="#polyf"/></svg><span>colortable_landcover.txt</span></div>
            <div class="brow d3"><svg class="ico"><use href="#rast"/></svg><span>landcover.img</span></div>
            <div class="brow d3 sel"><svg class="ico"><use href="#rast"/></svg><span>SR_50M_alaska_nad.tif</span></div>
            <div class="brow d2"><svg class="twist"><use href="#rchev"/></svg><svg class="ico"><use href="#folder"/></svg><span>shapefiles</span></div>
            <div class="brow d1"><svg class="twist"><use href="#rchev"/></svg><svg class="ico"><use href="#folder"/></svg><span>E:\Google Drive\QGIS_Course</span></div>
            <div class="brow d0"><svg class="twist"><use href="#rchev"/></svg><svg class="ico"><use href="#bookm"/></svg><span>Spatial Bookmarks</span></div>
            <div class="brow d0"><svg class="twist"><use href="#rchev"/></svg><svg class="ico"><use href="#home"/></svg><span>Home</span></div>
          </div>
          <div class="vscroll bv">
            <svg class="up"><use href="#uchev"/></svg><i class="thumb"></i><svg class="dn"><use href="#dchev"/></svg>
          </div>
          <div class="hscroll">
            <svg><use href="#lchev"/></svg><i class="hthumb"></i><svg><use href="#rchev"/></svg>
          </div>
        </div>
      </section>
    </div>

    <div class="map"><div class="cells" id="cells"></div></div>

    <section class="styling">
      <div class="dock-title wide"><span>Layer Styling</span><svg class="float"><use href="#float"/></svg><svg class="x"><use href="#close"/></svg></div>
      <div class="combo layer-combo"><svg class="rast"><use href="#rast"/></svg><span>SR_50M_alaska_nad</span><svg class="chev"><use href="#vchev"/></svg></div>

      <div class="style-body">
        <div class="tabs">
          <b class="tab on"><svg><use href="#s-brush"/></svg></b>
          <b class="tab"><svg><use href="#s-trans"/></svg></b>
          <b class="tab"><svg><use href="#s-hist"/></svg></b>
          <b class="tab"><svg><use href="#s-pyr"/></svg></b>
          <b class="tab"><svg><use href="#s-hist2"/></svg></b>
        </div>

        <div class="style-main">
          <div class="style-scroll">
            <div class="form">
              <div class="combo renderer"><svg class="pal"><use href="#pal"/></svg><span>Paletted/Unique values</span><svg class="chev"><use href="#vchev"/></svg></div>

              <div class="row band"><label>Band</label><div class="combo grow"><span>Band 1 (Gray)</span><svg class="chev"><use href="#vchev"/></svg></div></div>
              <div class="row ramp"><label>Color ramp</label><div class="ramp-btn"><span>Random colors</span><i><svg><use href="#tri"/></svg></i></div></div>

              <div class="table">
                <div class="thead"><span class="c-val">Value</span><span class="c-col">Color</span><span class="c-lab">Label</span></div>
                <div class="trow"><span class="c-val">52</span><i class="swatch s52"></i><span class="c-lab">52</span></div>
                <div class="trow"><span class="c-val">53</span><i class="swatch s53"></i><span class="c-lab">53</span></div>
                <div class="trow"><span class="c-val">54</span><i class="swatch s54"></i><span class="c-lab">54</span></div>
                <div class="trow"><span class="c-val">55</span><i class="swatch s55"></i><span class="c-lab">55</span></div>
                <div class="trow"><span class="c-val">56</span><i class="swatch s56"></i><span class="c-lab">56</span></div>
                <div class="trow"><span class="c-val">57</span><i class="swatch s57"></i><span class="c-lab">57</span></div>
                <div class="vscroll tv">
                  <svg class="up"><use href="#uchev"/></svg><i class="thumb"></i><svg class="dn"><use href="#dchev"/></svg>
                </div>
              </div>

              <div class="actions">
                <button class="classify">Classify</button>
                <button class="sq"><svg><use href="#plus"/></svg></button>
                <button class="sq"><svg class="mn"><use href="#minus"/></svg></button>
                <button class="delete">Delete All</button>
                <button class="dots">...</button>
              </div>

              <fieldset class="group">
                <legend>Layer Rendering</legend>
                <div class="grp-row"><label>Blending mode</label><div class="combo val"><span>Normal</span><svg class="chev"><use href="#vchev"/></svg></div></div>
                <div class="grp-row"><label>Brightness</label><div class="slider"><i></i></div><div class="spin"><span>0</span><em><svg><use href="#updown"/></svg></em></div></div>
                <div class="grp-row"><label>Saturation</label><div class="slider"><i></i></div><div class="spin"><span>0</span><em><svg><use href="#updown"/></svg></em></div></div>
                <div class="grp-row"><label>Contrast</label><div class="slider"><i></i></div><div class="spin"><span>0</span><em><svg><use href="#updown"/></svg></em></div></div>
                <div class="grp-row"><label>Grayscale</label><div class="combo val"><span>Off</span><svg class="chev"><use href="#vchev"/></svg></div></div>
                <div class="hue">
                  <label>Hue</label>
                  <div class="hue-rows">
                    <div class="hue-top"><span class="check"></span><span class="chk-label">Colorize</span><div class="swatch-btn"><i><svg><use href="#vchev"/></svg></i></div></div>
                    <div class="hue-str"><span>Strength</span><div class="slider grey"><i></i></div><div class="spin off"><span>100%</span><em><svg><use href="#updown"/></svg></em></div></div>
                  </div>
                </div>
                <div class="reset-row"><button class="reset"><svg><use href="#undoo"/></svg>Reset</button></div>
              </fieldset>
              <h5 class="clipped">Resampling</h5>
            </div>
            <div class="vscroll sv">
              <svg class="up"><use href="#uchev"/></svg><i class="thumb"></i><svg class="dn"><use href="#dchev"/></svg>
            </div>
          </div>

          <div class="applybar">
            <button class="hist"><svg><use href="#undoo"/></svg></button>
            <button class="hist"><svg><use href="#redog2"/></svg></button>
            <span class="live"><span class="check"><svg><use href="#tick"/></svg></span>Live update</span>
            <button class="apply">Apply</button>
          </div>
        </div>
      </div>
    </section>
  </div>

  <footer class="status">
    <div class="locate"><svg><use href="#search"/></svg><span>Type to locate (Ctrl+K)</span></div>
    <span class="st coord-l">Coordinate</span>
    <div class="field coord">-778348,3031147</div>
    <svg class="st-ic mouse"><use href="#mouse"/></svg>
    <span class="st scale-l">Scale</span>
    <div class="field scale"><span>1:300636</span><svg><use href="#vchev"/></svg></div>
    <svg class="st-ic lock"><use href="#lock"/></svg>
    <span class="st">Magnifier</span>
    <div class="field spinf mag"><span>100%</span><em><svg><use href="#updown"/></svg></em></div>
    <span class="st rot-l">Rotation</span>
    <div class="field spinf rot"><span>0,0 °</span><em><svg><use href="#updown"/></svg></em></div>
    <span class="check st-check"><svg><use href="#tick"/></svg></span>
    <span class="st">Render</span>
    <svg class="st-ic glob"><use href="#globes"/></svg>
    <span class="st">EPSG:2964</span>
    <svg class="st-ic bub"><use href="#bubble"/></svg>
    <svg class="st-ic puz"><use href="#puzzle"/></svg>
  </footer>
</div>

<script src="map.js"></script>
</body>
</html>
```

FILE: styles.css
```css
* {
  box-sizing: border-box;
}

html, body {
  margin: 0;
  height: 100%;
}

body {
  font-family: "Lato", "Liberation Sans", sans-serif;
  font-size: 10.5px;
  color: #222;
  background: #f0f0f0;
  overflow: hidden;
}

.sheet {
  position: absolute;
}

.window {
  width: 1200px;
  height: 781px;
  display: flex;
  flex-direction: column;
  overflow: hidden;
  outline: 1px solid #555;
  outline-offset: -1px;
}

/* title + menu */
.titlebar {
  height: 22px;
  flex: none;
  display: flex;
  align-items: center;
  background: #fff;
  padding-left: 8px;
  padding-top: 5px;
}

.logo {
  width: 14px;
  height: 14px;
  margin-right: 3px;
}

.title {
  font-size: 10.5px;
  letter-spacing: -.5px;
}

.winctl {
  margin-left: auto;
  margin-right: 15px;
  display: flex;
  gap: 28px;
}

.winctl svg {
  width: 10px;
  height: 10px;
}

.menu {
  height: 21px;
  flex: none;
  display: flex;
  align-items: center;
  background: #fff;
  padding-left: 1.800px;
  font-size: 10px;
}

.menu span {
  height: 18px;
  margin-top: 2px;
  line-height: 18px;
  padding: 0 6.200px;
}

.menu .on {
  background: #e5f1fb;
  outline: 1px solid #cce4f7;
  outline-offset: -1px;
}

/* toolbars */
.tb {
  display: flex;
  align-items: center;
  flex: none;
  background: #f0f0f0;
  border-bottom: 1px solid #dcdcdc;
}

.tb1 {
  height: 27px;
  padding-left: 8px;
  border-top: 1px solid #e2e2e2;
}

.tb2 {
  height: 28px;
  padding-left: 6px;
}

.tb3 {
  height: 28px;
  padding-left: 6.500px;
}

.btn {
  width: 25.700px;
  height: 24px;
  flex: none;
  display: flex;
  align-items: center;
  justify-content: center;
}

.btn svg {
  width: 20px;
  height: 20px;
}

.btn.n {
  width: 22px;
}

.btn.s {
  width: 24px;
}

.btn.active {
  background: #cfe4f6;
  outline: 1px solid #9cc7ea;
  outline-offset: -1px;
}

.drop {
  width: 12px;
  height: 24px;
  flex: none;
  display: flex;
  align-items: center;
  justify-content: center;
}

.drop svg {
  width: 7px;
  height: 4px;
}

.sep {
  height: 100%;
  flex: none;
  border-left: 1px solid #dcdcdc;
  background-image: radial-gradient(#aaa 0.6px, transparent 0.8px);
  background-size: 3px 3px;
  background-position: 2px 3px;
  background-repeat: repeat-y;
}

.w7 { width: 7px; }
.w9 { width: 9px; }
.w10 { width: 10px; }

.sep.push {
  margin-left: auto;
  width: 8px;
}

.grip {
  position: absolute;
  left: 4px;
  width: 3px;
  height: 20px;
  background-image: radial-gradient(#aaa 0.6px, transparent 0.8px);
  background-size: 3px 3px;
}

.more {
  font-size: 12px;
  font-weight: bold;
  text-align: center;
  width: 12px;
  flex: none;
}

.m1 {
  margin-left: 16px;
}

.m2 {
  margin-left: auto;
  margin-right: 1px;
}

.tb-spin {
  width: 72px;
  height: 20px;
  flex: none;
  display: flex;
  align-items: center;
  background: #f4f4f4;
  border: 1px solid #dcdcdc;
  padding: 0 3px;
  color: #888;
  justify-content: space-between;
}

.tb-spin svg {
  width: 6px;
  height: 10px;
  opacity: .6;
}

.tb-combo {
  width: 70px;
  height: 20px;
  flex: none;
  display: flex;
  align-items: center;
  justify-content: space-between;
  background: #cdcdcd;
  border: 1px solid #c4c4c4;
  padding: 0 5px 0 3px;
  color: #888;
}

.tb-combo svg,
.chev {
  width: 9px;
  height: 5px;
}

/* main row */
.main {
  flex: 1;
  display: flex;
  min-height: 0;
}

.lbar {
  width: 29px;
  flex: none;
  display: flex;
  flex-direction: column;
  align-items: center;
  padding-top: 4px;
}

.lbar b {
  height: 25px;
  width: 24px;
  flex: none;
  display: flex;
  align-items: center;
  justify-content: center;
}

.lbar svg {
  width: 21px;
  height: 21px;
}

.lbar .last {
  margin-top: -4px;
}

.hgrip {
  width: 22px;
  height: 3px;
  margin-bottom: 3px;
  background-image: radial-gradient(#aaa 0.6px, transparent 0.8px);
  background-size: 3px 3px;
}

.hsep {
  width: 18px;
  height: 1px;
  margin: 2px 0 2px;
  background: #dcdcdc;
}

.hline {
  width: 29px;
  height: 1px;
  margin: 2px 0 3px;
  background: #dcdcdc;
}

.docks {
  width: 221px;
  flex: none;
  display: flex;
  flex-direction: column;
  padding: 2px 3px 0 1px;
}

.dock {
  display: flex;
  flex-direction: column;
}

.layers {
  flex: 1;
  min-height: 0;
}

.browser {
  height: 179px;
  flex: none;
  padding-top: 3px;
}

.dock-title {
  height: 21px;
  flex: none;
  display: flex;
  align-items: center;
  background: #d9d9d9;
  padding: 0 4px;
}

.dock-title .float {
  margin-left: auto;
  width: 13px;
  height: 13px;
  margin-right: 5px;
}

.dock-title .x {
  width: 11px;
  height: 11px;
  margin-right: 1px;
}

.dock-title.wide {
  margin: 2px 0 0 2px;
  border: 1px solid #cfcfcf;
  padding-right: 4px;
}

.dock-tools {
  height: 23px;
  flex: none;
  display: flex;
  align-items: center;
  padding-left: 1px;
}

.dock-tools.short {
  height: 22px;
}

.dock-tools .btn {
  width: 19.200px;
  height: 20px;
}

.dock-tools .btn svg {
  width: 16px;
  height: 16px;
}

.dock-tools .drop {
  width: 10px;
}

.tree {
  flex: 1;
  min-height: 0;
  background: #fff;
  border: 1px solid #a0a0a0;
  position: relative;
}

.layer-row {
  height: 17px;
  display: flex;
  align-items: center;
  background: linear-gradient(#e0e0e0, #e0e0e0) 17px 0 no-repeat;
}

.twist {
  width: 5px;
  height: 8px;
  flex: none;
}

.layer-row .twist {
  margin: 0 8px 0 5px;
}

.check {
  width: 11px;
  height: 11px;
  flex: none;
  display: inline-block;
  background: #fff;
  border: 1px solid #333;
}

.check svg {
  display: block;
  width: 9px;
  height: 9px;
}

.layer-row .check {
  margin-right: 6px;
}

.rast {
  width: 12px;
  height: 12px;
  flex: none;
}

.layer-name {
  margin-left: 5px;
  font-size: 10px;
  font-weight: bold;
  letter-spacing: -.15px;
  text-decoration: underline;
}

/* browser tree */
.btree {
  display: grid;
  grid-template-columns: 1fr 14px;
  grid-template-rows: 1fr 14px;
  font-size: 9.800px;
}

.brows {
  overflow: hidden;
  padding-top: 1px;
}

.brow {
  height: 16.600px;
  display: flex;
  align-items: center;
  white-space: nowrap;
}

.brow .ico {
  width: 12px;
  height: 12px;
  margin-right: 5px;
  flex: none;
}

.brow .twist {
  margin-right: 8px;
}

.d0 { padding-left: 6px; }
.d1 { padding-left: 22px; }
.d2 { padding-left: 39px; }
.d3 { padding-left: 70px; }

.brow.sel {
  background: linear-gradient(#e0e0e0, #e0e0e0) 66px 0 no-repeat;
}

.vscroll {
  position: relative;
  background: #f0f0f0;
}

.vscroll .up,
.vscroll .dn {
  position: absolute;
  left: 50%;
  margin-left: -4px;
  width: 8px;
  height: 5px;
}

.vscroll .up { top: 5px; }
.vscroll .dn { bottom: 5px; }

.thumb {
  position: absolute;
  left: 0;
  right: 0;
  background: #cdcdcd;
}

.bv .thumb {
  top: 29px;
  height: 15px;
}

.hscroll {
  grid-column: 1 / 3;
  display: flex;
  align-items: center;
  background: #f0f0f0;
  padding: 0 6px 0 6px;
  position: relative;
  justify-content: space-between;
}

.hscroll svg {
  width: 5px;
  height: 8px;
}

.hthumb {
  position: absolute;
  left: 14px;
  width: 86px;
  height: 100%;
  background: #cdcdcd;
}

/* map */
.map {
  width: 558px;
  flex: none;
  background: #22e34a;
  overflow: hidden;
  margin-top: 1px;
}

.cells {
  display: grid;
  grid-template-columns: repeat(16, 22.700px);
  grid-auto-rows: 22.700px;
  margin-left: 197.100px;
  margin-top: -14.700px;
  width: 364px;
}

.G { background: #22e34a; }
.R { background: #e0776e; }
.T { background: #22bbd0; }
.Y { background: #dfd545; }
.B { background: #65c7e3; }
.L { background: #88d326; }
.K { background: #a0d63a; }
.S { background: #e4c562; }
.O { background: #ee7026; }
.M { background: #c653a3; }
.C { background: #13bdf0; }
.D { background: #e3801f; }
.N { background: #5b80d1; }
.P { background: #ae6dcf; }
.A { background: #2be38b; }

/* layer styling panel */
.styling {
  width: 392px;
  flex: none;
  display: flex;
  flex-direction: column;
  padding-right: 4px;
}

.combo {
  display: flex;
  align-items: center;
  height: 17px;
  background: #e2e2e2;
  border: 1px solid #bdbdbd;
  padding: 0 5px 0 3px;
}

.combo .chev {
  margin-left: auto;
}

.layer-combo {
  height: 18px;
  margin: 4px 0 5px 7px;
  font-size: 9.500px;
  letter-spacing: -.1px;
}

.layer-combo span {
  margin-left: 2px;
}

.style-body {
  flex: 1;
  display: flex;
  min-height: 0;
  padding-left: 6px;
}

.tabs {
  width: 31px;
  flex: none;
  background: #595959;
  margin-bottom: 2px;
}

.tab {
  height: 28px;
  display: flex;
  align-items: center;
  justify-content: center;
}

.tab svg {
  width: 20px;
  height: 20px;
}

.tab.on {
  background: #f0f0f0;
}

.style-main {
  flex: 1;
  min-width: 0;
  display: flex;
  flex-direction: column;
}

.style-scroll {
  height: 556px;
  flex: none;
  display: flex;
  align-items: flex-start;
}

.form {
  width: 339px;
  height: 556px;
  padding: 8px 9px 0 10px;
  overflow: hidden;
  font-size: 9.500px;
  letter-spacing: -.25px;
}

.sv {
  width: 12px;
  height: 551px;
}

.sv .thumb {
  top: 13px;
  height: 452px;
}

.renderer {
  height: 18px;
  font-size: 10.300px;
  letter-spacing: 0;
}

.pal {
  width: 13px;
  height: 13px;
  margin-right: 3px;
}

.row {
  display: flex;
  align-items: center;
  margin: 7px 2px 0 1px;
}

.row label {
  width: 49px;
  flex: none;
}

.band .combo {
  font-size: 10.300px;
  letter-spacing: 0;
}

.grow {
  flex: 1;
}

.ramp {
  margin-top: 6px;
}

.ramp label {
  white-space: nowrap;
}

.ramp-btn {
  flex: 1;
  height: 17px;
  display: flex;
  align-items: center;
  background: #dedede;
  border: 1px solid #c4c4c4;
}

.ramp-btn span {
  flex: 1;
  text-align: center;
}

.ramp-btn i {
  width: 10px;
  height: 100%;
  background: #f0f0f0;
  border-left: 1px solid #888;
  display: flex;
  align-items: center;
  justify-content: center;
}

.ramp-btn svg {
  width: 7px;
  height: 4px;
}

.table {
  position: relative;
  height: 231px;
  margin: 5px 2px 0 2px;
  background: #fff;
  border: 1px solid #999;
  overflow: hidden;
  padding-top: 2px;
}

.thead {
  height: 15px;
  margin-bottom: 2px;
  display: flex;
  align-items: center;
}

.trow {
  height: 36.400px;
  display: flex;
  align-items: center;
}

.thead .c-val {
  width: 85px;
  padding-left: 3px;
}

.thead .c-col {
  width: 48px;
}

.trow .c-val {
  width: 90px;
  padding-left: 19px;
}

.swatch {
  width: 35px;
  height: 35px;
  border-radius: 6px;
  margin-right: 8px;
  flex: none;
}

.s52 { background: #3450d8; }
.s53 { background: #d6ee3a; }
.s54 { background: #7fd66b; }
.s55 { background: #c2e664; }
.s56 { background: #8e20e0; }
.s57 { background: #d826e6; }

.tv {
  position: absolute;
  top: 0;
  right: 0;
  bottom: 0;
  width: 14px;
}

.tv .thumb {
  top: 14px;
  height: 15px;
}

button {
  font: inherit;
  letter-spacing: inherit;
  color: inherit;
  background: #e2e2e2;
  border: 1px solid #bdbdbd;
  padding: 0;
  height: 17px;
  display: block;
}

.actions {
  display: flex;
  margin: 6px 2px 0 2px;
}

.classify {
  width: 114px;
}

.sq {
  width: 21px;
  margin-left: 7px;
  display: flex;
  align-items: center;
  justify-content: center;
}

.sq svg {
  width: 12px;
  height: 12px;
}

.sq .mn {
  height: 6px;
}

.delete {
  width: 112px;
  margin-left: 8px;
}

.dots {
  width: 17px;
  margin-left: 7px;
  background: #f0f0f0;
}

.group {
  margin: 10px 0 0 0;
  padding: 6px 8px 6px 7px;
  border: 1px solid #e2e2e2;
  height: 199px;
  min-width: 0;
}

.group legend {
  padding: 0;
  font-size: 10.500px;
  letter-spacing: 0;
  font-weight: bold;
  line-height: 10px;
}

.grp-row {
  display: flex;
  align-items: center;
  height: 23px;
}

.grp-row label {
  width: 128px;
  flex: none;
}

.val {
  flex: 1;
  height: 16px;
}

.slider {
  width: 134px;
  height: 2px;
  background: #dedede;
  position: relative;
  flex: none;
}

.slider i {
  position: absolute;
  left: 63px;
  top: -8px;
  width: 8px;
  height: 17px;
  background: #0a74cc;
}

.spin {
  width: 36px;
  height: 15px;
  margin-left: 5px;
  flex: none;
  display: flex;
  align-items: center;
  background: #fff;
  border: 1px solid #777;
  padding-left: 1px;
}

.spin em,
.spinf em {
  margin-left: auto;
  width: 11px;
  height: 100%;
  background: #e8e8e8;
  display: flex;
  align-items: center;
  justify-content: center;
}

.spin em svg,
.spinf em svg {
  width: 6px;
  height: 9px;
}

.hue {
  display: flex;
  align-items: center;
}

.hue label {
  width: 128px;
  flex: none;
}

.hue-rows {
  flex: 1;
}

.hue-top {
  display: flex;
  align-items: center;
  height: 21px;
}

.chk-label {
  margin-left: 4px;
}

.swatch-btn {
  margin-left: auto;
  width: 81px;
  height: 16px;
  background: #c6c2c2;
  position: relative;
}

.swatch-btn i {
  position: absolute;
  right: 0;
  top: 0;
  width: 11px;
  height: 100%;
  background: #d4d4d4;
  border-left: 1px solid #eee;
  display: flex;
  align-items: center;
  justify-content: center;
}

.swatch-btn svg {
  width: 7px;
  height: 4px;
}

.hue-str {
  display: flex;
  align-items: center;
  height: 24px;
}

.slider.grey {
  width: 86px;
  margin-left: 6px;
}

.slider.grey i {
  left: 79px;
  width: 8px;
  background: #d0cccc;
}

.spin.off {
  width: 42px;
  margin-left: 7px;
  border-color: #d8d8d8;
  background: #f4f4f4;
  color: #999;
}

.spin.off em {
  background: #f0f0f0;
}

.reset-row {
  display: flex;
  padding-left: 191px;
  margin-top: 2px;
}

.reset {
  width: 49px;
  display: flex;
  align-items: center;
  justify-content: center;
  gap: 3px;
}

.reset svg {
  width: 10px;
  height: 10px;
}

.clipped {
  margin: 11px 0 0 8px;
  font-size: 10.500px;
  letter-spacing: 0;
}

.applybar {
  display: flex;
  align-items: center;
  height: 21px;
  font-size: 9.500px;
  letter-spacing: -.25px;
  padding-left: 4px;
}

.hist {
  width: 16px;
  height: 16px;
  margin-right: 8px;
  display: flex;
  align-items: center;
  justify-content: center;
  background: #e8e8e8;
}

.hist svg {
  width: 12px;
  height: 12px;
}

.live {
  margin-left: auto;
  display: flex;
  align-items: center;
  gap: 4px;
}

.apply {
  width: 61px;
  margin-left: 10px;
}

/* status bar */
.status {
  height: 26px;
  flex: none;
  display: flex;
  align-items: center;
  padding: 0 4px;
  background: #f0f0f0;
  font-size: 9.500px;
  letter-spacing: -.25px;
}

.locate {
  width: 166px;
  height: 17px;
  flex: none;
  display: flex;
  align-items: center;
  background: #fff;
  border: 1px solid #8a8a8a;
  color: #777;
  padding-left: 5px;
  gap: 5px;
}

.locate svg {
  width: 10px;
  height: 10px;
}

.st {
  flex: none;
}

.coord-l {
  margin-left: 335px;
  width: 44px;
}

.field {
  height: 18px;
  background: #fff;
  border: 1px solid #8a8a8a;
  display: flex;
  align-items: center;
  padding-left: 3px;
  margin-left: 4px;
  flex: none;
}

.coord {
  width: 88px;
  justify-content: center;
  padding: 0;
  letter-spacing: -.5px;
}

.scale {
  width: 63px;
  justify-content: space-between;
  padding-right: 5px;
}

.scale svg {
  width: 9px;
  height: 5px;
}

.mag {
  width: 65px;
}

.rot {
  width: 62px;
  margin-left: 9px;
}

.rot-l {
  margin-left: 8px;
}

.st-ic {
  flex: none;
}

.mouse {
  width: 12px;
  height: 14px;
  margin-left: 4px;
}

.scale-l {
  margin-left: 10px;
}

.lock {
  width: 12px;
  height: 14px;
  margin: 0 5px 0 9px;
}

.st-check {
  margin: 0 3px 0 3px;
}

.glob {
  width: 12px;
  height: 12px;
  margin: 0 3px 0 15px;
}

.bub {
  width: 14px;
  height: 14px;
  margin-left: 25px;
}

.puz {
  width: 20px;
  height: 20px;
  margin-left: 12px;
}

/* text inside icons */
.svg-small { font: 8px "Liberation Sans", sans-serif; fill: #333; }
.svg-bold { font: bold 6px "Liberation Sans", sans-serif; fill: #333; }
.svg-q { font: bold 11px "Liberation Sans", sans-serif; fill: #cfe0f0; }
.svg-tag { font: 6px "Liberation Sans", sans-serif; fill: #999; }
.svg-tag-d { font: bold 6.500px "Liberation Sans", sans-serif; fill: #1f3f66; }
.svg-tag-r { font: 6px "Liberation Sans", sans-serif; fill: #c8202c; }
.svg-easy { font: italic bold 7px "Liberation Sans", sans-serif; fill: #222; }
.svg-ipy { font: bold 8px "Liberation Mono", monospace; fill: #cfd4d8; }
.svg-w { font: bold 10px "Liberation Sans", sans-serif; fill: #111; }
.svg-kr { fill: #d8202c; }
```

FILE: map.js
```js
// raster values as seen at this zoom, one letter per cell (see colour classes)
var rows = [
  "GGGGGGTOYBLKSBOO",
  "GGGGGGRTYBLKSBOO",
  "GGGGGGRTBSSSBRBB",
  "GGGGGGGGGGGGGBBB",
  "GGGGGGGGGGGGGBSB",
  "GGGGGGGGGGMGRGRO",
  "GGGGGMGGGGMGRGRO",
  "GGGGGMOCLYGGBGYY",
  "GGGGGYOYOOOSBGYY",
  "GGGGGYOYOORSGOYY",
  "GGGGYOYOYLOBROYY",
  "GGGOYOYOYLOBROYY",
  "GGGOOOOYLGRYOOOR",
  "GGMOOROGLNRYOOOR",
  "GGMOOROGLNDDLSBR",
  "GGMRGOOLDDDDLSGR",
  "GGMRGOOLDDDDLSGY",
  "GGGGOORSSSRRGGYY",
  "GGGGYOSSSSRRGGYY",
  "GGGGYRSSRRGGYLOL",
  "GGOYYSLBRGOOLLOL",
  "GGOYBSLBRGOOLYLY",
  "GGLYBSBGGRGLLPPY",
  "GMYBLSBGGRGLLPPY",
  "GMYBLRBRGYLPLPLR",
  "GLRSSBOYLLLPLPLR",
  "GLRSSBOYLLLBLDNA",
  "MYBBBGYLORDKANKN",
  "RLLBBGYLORDKANKN"
];

var box = document.getElementById("cells");
rows.forEach(function (row) {
  row.split("").forEach(function (v) {
    var d = document.createElement("div");
    d.className = v;
    box.appendChild(d);
  });
});
```
